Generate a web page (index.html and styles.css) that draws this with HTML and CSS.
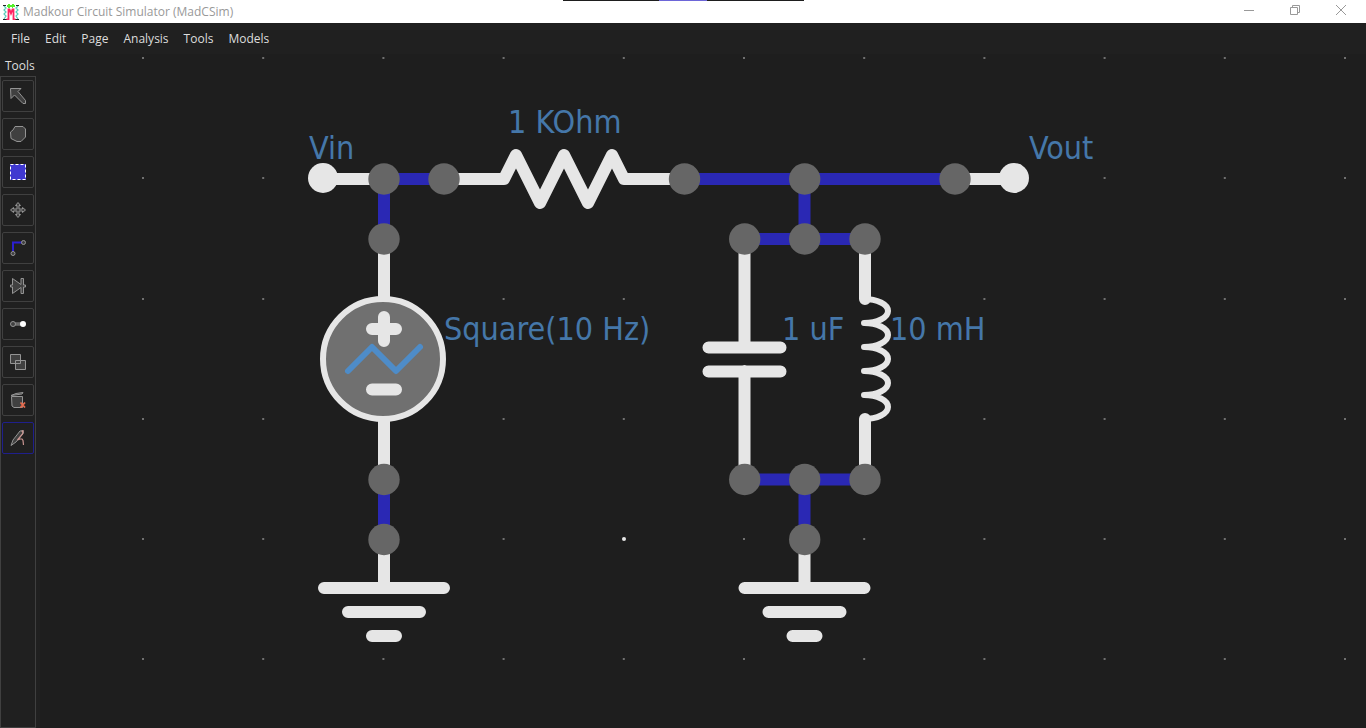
FILE: index.html
```html
<!DOCTYPE html>
<html lang="en">
<head>
<meta charset="utf-8">
<title>Madkour Circuit Simulator (MadCSim)</title>
<link rel="stylesheet" href="styles.css">
</head>
<body>
<header class="titlebar">
  <div class="strip"><span class="strip-mark"></span></div>
  <svg class="logo" viewBox="0 0 16 16" aria-hidden="true">
    <path d="M1 2 3 4 1 6 3 8 1 10 3 12 1 15M15 2 13 4 15 6 13 8 15 10 13 12 15 15" fill="none" stroke="#58cdb9" stroke-width="1.2"/>
    <path d="M0 1.500H3M0 15.500H4M13 1.500H16M12 15.500H16" stroke="#222"/>
    <path d="M4 1H5V0H7V1H9V0H11V1H12V3H10V4H9V3H7V4H5V3H4Z" fill="#55f02c"/>
    <path d="M3.500 15.500H5.500V5.500H6.500L8 9.500 9.500 5.500H10.500V15.500H12.500" fill="none" stroke="#ff2462" stroke-width="1.800"/>
  </svg>
  <h1 class="title">Madkour Circuit Simulator (MadCSim)</h1>
  <div class="window-controls">
    <button class="win" aria-label="Minimize"><svg viewBox="0 0 10 10"><path d="M0 5.500H10"/></svg></button>
    <button class="win" aria-label="Restore"><svg viewBox="0 0 10 10"><path d="M.5 2.500H7.500V9.500H.5ZM2.500 2.500V.5H9.500V7.500H7.500"/></svg></button>
    <button class="win" aria-label="Close"><svg viewBox="0 0 10 10"><path d="M0 0 10 10M10 0 0 10"/></svg></button>
  </div>
</header>
<nav class="menubar">
  <button class="menu">File</button>
  <button class="menu">Edit</button>
  <button class="menu">Page</button>
  <button class="menu">Analysis</button>
  <button class="menu">Tools</button>
  <button class="menu">Models</button>
</nav>
<main class="workspace">
  <aside class="sidebar">
    <h2 class="sidebar-title">Tools</h2>
    <div class="tools">
      <button class="tool" aria-label="Select"><svg viewBox="0 0 16 16"><path class="shape" d="M.5.5H11L8 3.500 15.500 12.500V15.500H13L4.500 7 1 10.500Z"/></svg></button>
      <button class="tool" aria-label="Lasso"><svg viewBox="0 0 16 16"><path class="shape" d="M5 .5H13L15.500 3V11L11 15.500H7L1 12.500.5 6 3 4Z"/></svg></button>
      <button class="tool" aria-label="Area select"><svg viewBox="0 0 16 16"><path fill="#4039d0" d="M0 0H16V16H0Z"/><path d="M.5.5H15.500V15.500H.5Z" fill="none" stroke="#fff" stroke-dasharray="3 2"/></svg></button>
      <button class="tool" aria-label="Move"><svg viewBox="0 0 16 16"><path class="shape" d="M8 .5 10.500 3.500H9V7H12.500V5.500L15.500 8 12.500 10.500V9H9V12.500H10.500L8 15.500 5.500 12.500H7V9H3.500V10.500L.5 8 3.500 5.500V7H7V3.500H5.500Z"/></svg></button>
      <button class="tool" aria-label="Wire"><svg viewBox="0 0 16 16"><path d="M3 12V2.500H12" fill="none" stroke="#2a1fd0" stroke-width="2"/><circle class="shape" cx="13.500" cy="2.500" r="2"/><circle class="shape" cx="3" cy="13.500" r="2"/></svg></button>
      <button class="tool" aria-label="Component"><svg viewBox="0 0 16 16"><path class="shape" d="M2.500.5 11 6.500V.5H13.500V7H15.500V9H13.500V15.500H11V9.500L2.500 15.500V9H.5V7H2.500Z"/></svg></button>
      <button class="tool" aria-label="Terminal"><svg viewBox="0 0 16 16"><path class="shape" d="M4 7H12V9H4Z"/><circle class="shape" cx="3" cy="8" r="2.500"/><circle cx="13" cy="8" r="3" fill="#fff"/></svg></button>
      <button class="tool" aria-label="Copy"><svg viewBox="0 0 16 16"><path class="shape" d="M.5.5H10.500V9.500H.5ZM5.500 6.500H15.500V15.500H5.500Z"/></svg></button>
      <button class="tool" aria-label="Delete"><svg viewBox="0 0 16 16"><path class="shape" d="M1.500 4.500H12.500V15.500H4L2 14ZM1 3.500 6 1.500 13 .5 12 2Z"/><path d="M10.500 10.500 15 15.500M15 10.500 10.500 15.500" stroke="#e46a4d" stroke-width="1.800"/></svg></button>
      <button class="tool tool-active" aria-label="Probe"><svg viewBox="0 0 16 16"><path class="shape" d="M1 15.500 3 10 10 1 13 .5 13.500 3 6 12Z"/><path d="M11.500 1.500 13 1 12.500 4 7.500 10 10 9 12 9 13 10.500 13.500 15" fill="none" stroke="#c99592" stroke-width="1.200"/></svg></button>
    </div>
  </aside>
  <svg class="canvas" role="img" aria-label="Circuit schematic">
    <defs>
      <g id="ground"><path d="M0 0V49M-60 49H60M-36 73H36M-12 97H12"/></g>
      <g id="dots">
        <path class="dots" d="M143 0H1366" stroke-dasharray="2 118.200"/>
      </g>
    </defs>
    <g transform="translate(-40 -54)">
      <g transform="translate(-1 58)">
        <use href="#dots"/><use href="#dots" y="120"/><use href="#dots" y="241"/><use href="#dots" y="361"/><use href="#dots" y="481"/><use href="#dots" y="601"/>
      </g>
      <circle cx="624" cy="539" r="2" fill="#e6e6e6"/>
      <g class="wires"><path d="M384 179H444M384 179V239M384 479V539M684 179H955M804.500 179V239M744 239H865M744 479.500H865M804.500 479V539"/></g>
      <g class="parts">
        <path d="M323 179H384M444 179H504L516 155 540 203 564 155 588 203 612 155 624 179H684M955 179H1014"/>
        <path d="M384 239V299M384 419V479M744.500 239V347M744.500 371V479M865 239V299M865 419V479M708.500 347.500H780.500M708.500 371.500H780.500"/>
        <path class="coil" d="M864 299a24 12 0 0 1 0 24a24 12 0 0 1 0 24a24 12 0 0 1 0 24a24 12 0 0 1 0 24a24 12 0 0 1 0 24"/>
        <circle class="source" cx="383" cy="359" r="60"/>
        <path d="M372 329H396M384 317V341M372 389.500H396"/>
        <path class="wave" d="M348 371 372 347 396 371 420 347"/>
        <use href="#ground" x="384" y="539"/>
        <use href="#ground" x="804.500" y="539"/>
      </g>
      <circle class="terminal" cx="323" cy="178" r="15"/>
      <circle class="terminal" cx="1014" cy="178" r="15"/>
      <g class="nodes">
        <circle cx="384" cy="179" r="15.700"/><circle cx="444" cy="179" r="15.700"/><circle cx="684.500" cy="179" r="15.700"/><circle cx="804.700" cy="179" r="15.700"/><circle cx="955" cy="179" r="15.700"/>
        <circle cx="384" cy="239" r="15.700"/><circle cx="744.700" cy="239" r="15.700"/><circle cx="804.700" cy="239" r="15.700"/><circle cx="865" cy="239" r="15.700"/>
        <circle cx="384" cy="479.500" r="15.700"/><circle cx="744.700" cy="479.500" r="15.700"/><circle cx="804.700" cy="479.500" r="15.700"/><circle cx="865" cy="479.500" r="15.700"/>
        <circle cx="384" cy="539.500" r="15.700"/><circle cx="804.700" cy="539.500" r="15.700"/>
      </g>
      <g class="labels">
        <text x="309" y="159">Vin</text>
        <text x="508" y="133">1 KOhm</text>
        <text x="1029" y="159">Vout</text>
        <text x="444" y="340">Square(10 Hz)</text>
        <text x="782" y="340">1 uF</text>
        <text x="890" y="340">10 mH</text>
      </g>
    </g>
  </svg>
</main>
</body>
</html>
```
FILE: styles.css
```css
* { box-sizing: border-box; }

body {
  margin: 0;
  height: 100vh;
  display: flex;
  flex-direction: column;
  overflow: hidden;
  background: #1e1e1e;
  font: 12px/16px "Open Sans", "Noto Sans", sans-serif;
}

button {
  margin: 0;
  padding: 0;
  border: 0;
  background: none;
  color: inherit;
  font: inherit;
}

.titlebar {
  position: relative;
  flex: none;
  display: flex;
  align-items: center;
  height: 23px;
  padding-left: 3px;
  background: #fff;
}

.strip {
  position: absolute;
  top: 0;
  left: 50%;
  width: 241px;
  height: 1px;
  margin-left: -120px;
  background: #1e1e1e;
}

.strip-mark {
  display: block;
  width: 48px;
  height: 1px;
  margin-left: 96px;
  background: #6d66d8;
}

.logo { width: 16px; height: 16px; }

.title {
  flex: 1;
  margin: 0 0 0 4px;
  color: #999;
  font-size: 12px;
  font-weight: 400;
}

.window-controls { display: flex; align-self: stretch; }

.win { width: 46px; padding-right: 4px; padding-bottom: 3px; display: grid; place-items: center; }

.win svg { width: 10px; height: 10px; fill: none; stroke: #999; }

.menubar {
  flex: none;
  display: flex;
  gap: 15px;
  height: 31px;
  padding: 0 11px;
  background: #202020;
  color: #ddd;
}

.workspace { flex: 1; min-height: 0; display: flex; }

.sidebar {
  flex: none;
  display: flex;
  flex-direction: column;
  width: 40px;
  background: #202020;
}

.sidebar-title {
  margin: 0;
  height: 22px;
  padding: 4px 5px;
  color: #ddd;
  font-size: 12px;
  font-weight: 400;
}

.tools {
  flex: 1;
  display: flex;
  flex-direction: column;
  gap: 6px;
  width: 36px;
  padding: 3px 1px;
  border: 1px solid #404040;
}

.tool {
  display: grid;
  place-items: center;
  flex: none;
  width: 32px;
  height: 32px;
  border: 1px solid #404040;
  border-radius: 2px;
}

.tool-active { border-color: #1f1f8c; }

.tool svg { width: 16px; height: 16px; }

.shape { fill: #404040; stroke: #949494; }

.canvas { flex: 1; min-width: 0; height: 100%; }

.dots { stroke: #707070; stroke-width: 2; }

.wires { fill: none; stroke: #2a28b4; stroke-width: 12; }

.parts {
  fill: none;
  stroke: #e6e6e6;
  stroke-width: 12;
  stroke-linecap: round;
  stroke-linejoin: round;
}

.coil { stroke-width: 6; }

.source { fill: #707070; stroke-width: 6; }

.wave { stroke: #4e8cc8; stroke-width: 6; }

.terminal { fill: #e6e6e6; }

.nodes { fill: #666; }

.labels {
  fill: #4577a9;
  font-family: "DejaVu Sans Condensed", "Noto Sans", sans-serif;
  font-size: 32px;
}
```
